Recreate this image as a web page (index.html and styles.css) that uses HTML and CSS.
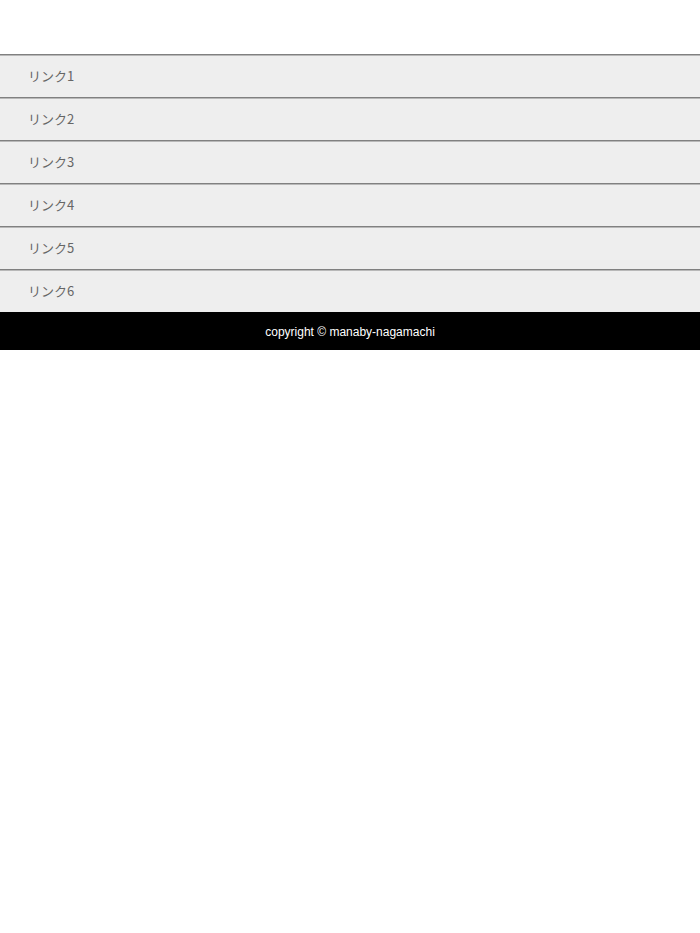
FILE: index.html
```html
<!DOCTYPE html>
<html lang="ja">
<head>
<meta charset="utf-8">
<link rel="stylesheet" href="styles.css">
</head>
<body>
<nav class="menu">
  <ul class="menu-list">
    <li class="menu-item"><a href="#">リンク1</a></li>
    <li class="menu-item"><a href="#">リンク2</a></li>
    <li class="menu-item"><a href="#">リンク3</a></li>
    <li class="menu-item"><a href="#">リンク4</a></li>
    <li class="menu-item"><a href="#">リンク5</a></li>
    <li class="menu-item"><a href="#">リンク6</a></li>
  </ul>
</nav>
<footer class="footer">copyright © manaby-nagamachi</footer>
</body>
</html>
```
FILE: styles.css
```css
html, body {
  margin: 0;
  padding: 0;
  background: #fff;
  font-family: "Noto Sans CJK JP", "Liberation Sans", sans-serif;
}
.menu {
  padding-top: 54px;
}
.menu-list {
  list-style: none;
  margin: 0;
  padding: 0;
}
.menu-item {
  background: #eeeeee;
  border-top: 1px solid #808080;
  box-shadow: inset 0 1px 0 #b8b8b8;
}
.menu-item a {
  display: flex;
  align-items: center;
  height: 42px;
  padding-left: 28px;
  padding-bottom: 1px;
  box-sizing: border-box;
  color: #666;
  font-size: 13px;
  text-decoration: none;
}
.footer {
  background: #000;
  color: #fff;
  height: 38px;
  display: flex;
  align-items: center;
  justify-content: center;
  padding-top: 2px;
  box-sizing: border-box;
  font-family: "Liberation Sans", sans-serif;
  font-size: 12px;
}
```
